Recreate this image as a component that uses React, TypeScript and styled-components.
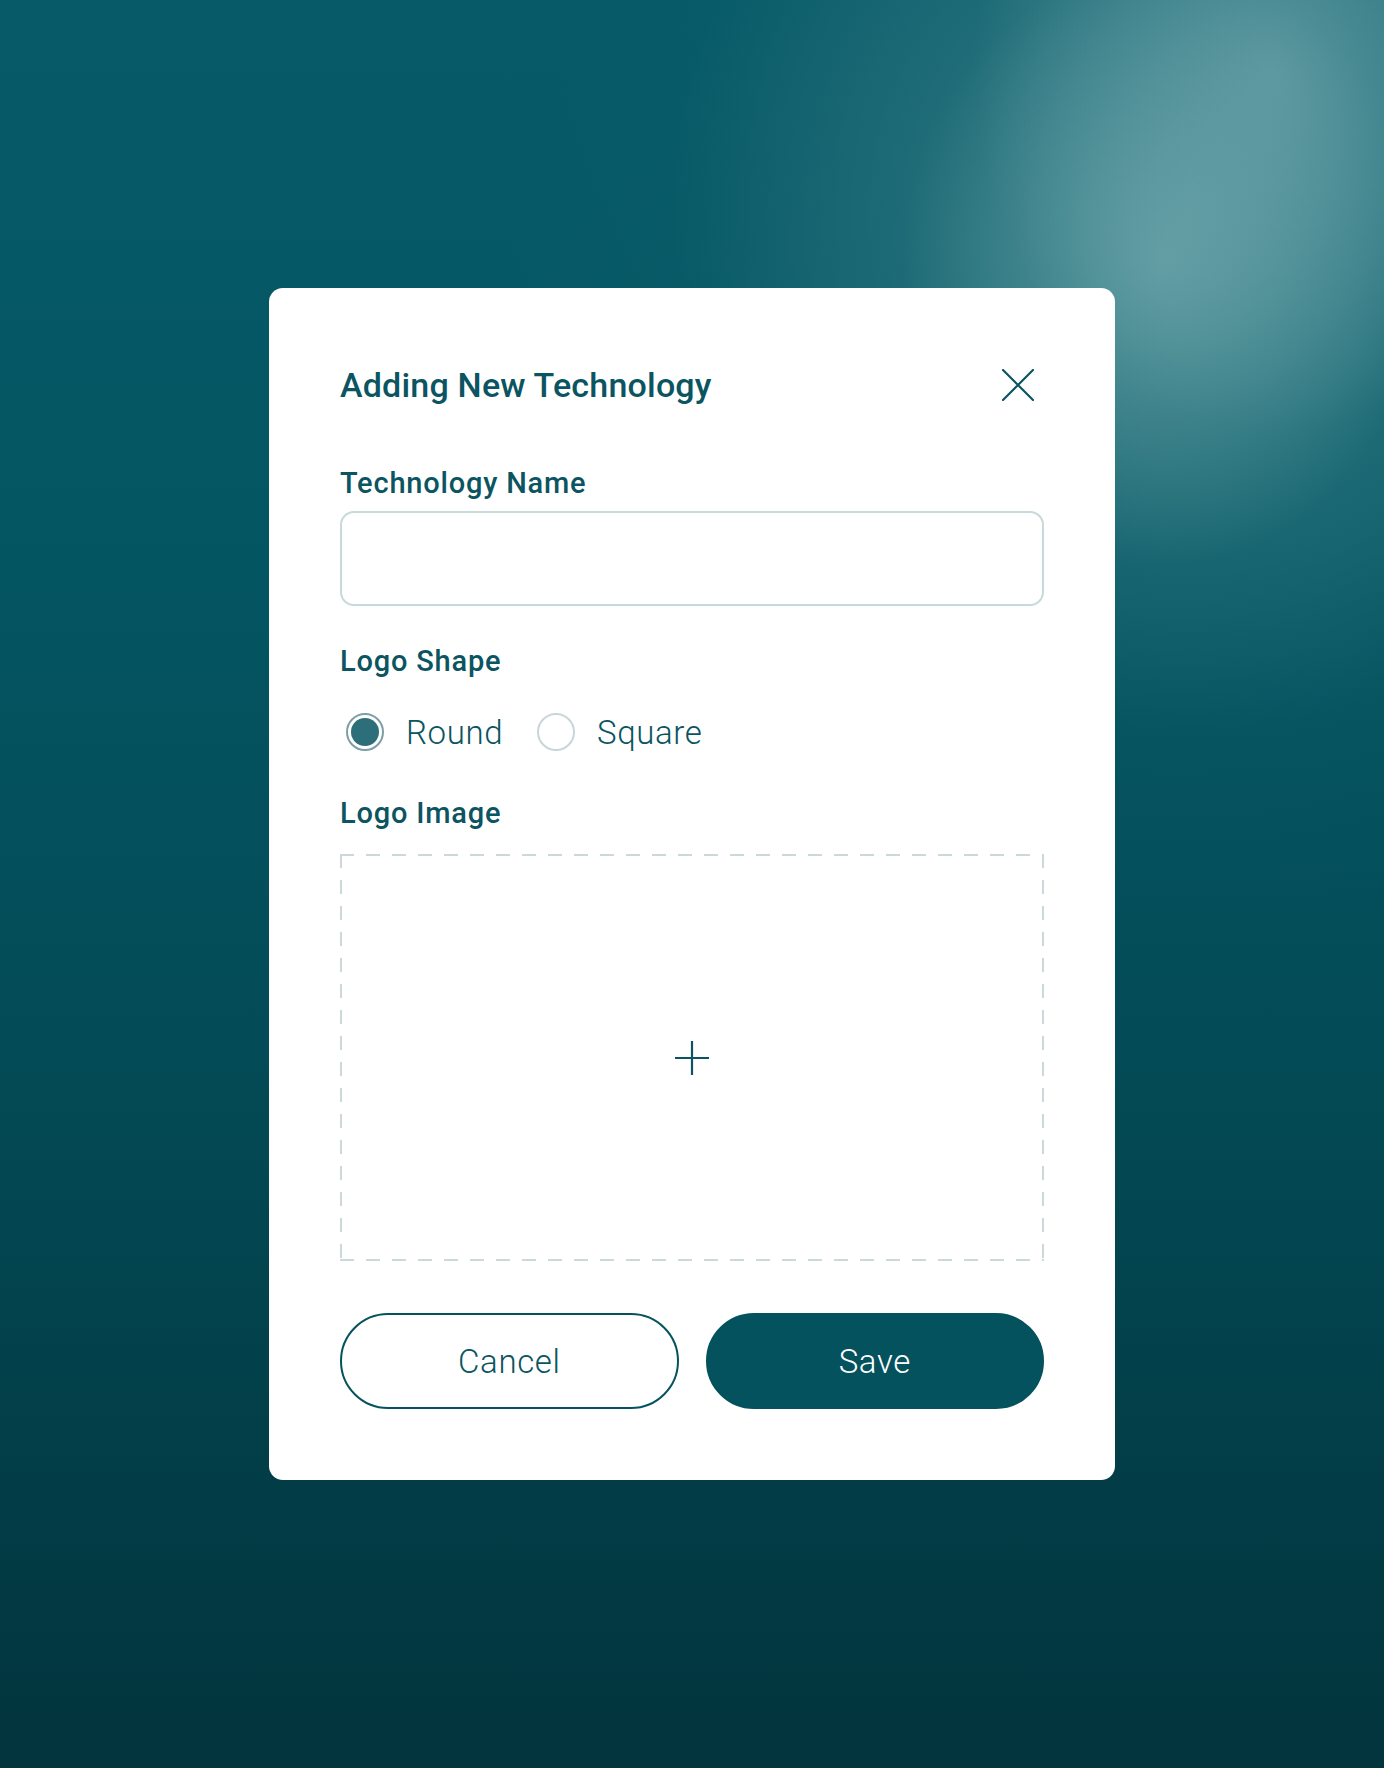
import React, { useState } from "react";
import styled, { createGlobalStyle } from "styled-components";

const ink = "#0b5461";
const deep = "#03525d";

const GlobalStyle = createGlobalStyle`
  html, body {
    margin: 0;
    padding: 0;
  }
  body {
    font-family: Roboto, "Liberation Sans", Arial, sans-serif;
    background: #04444f;
  }
  * {
    box-sizing: border-box;
  }
`;

const Backdrop = styled.div`
  min-height: 100vh;
  display: flex;
  align-items: center;
  justify-content: center;
  background:
    radial-gradient(ellipse 260px 300px at 84% 15%, rgba(125, 178, 182, 0.55), transparent 100%),
    radial-gradient(ellipse 300px 360px at 92% 4%, rgba(120, 172, 178, 0.6), transparent 100%),
    radial-gradient(ellipse 520px 520px at 86% 12%, rgba(90, 152, 158, 0.55), transparent 100%),
    radial-gradient(ellipse 900px 800px at 85% 18%, rgba(30, 110, 120, 0.35), transparent 75%),
    linear-gradient(180deg, #075a68 0%, #045663 30%, #034b56 60%, #02343d 100%);
`;

const Modal = styled.div`
  width: 846px;
  background: #fff;
  border-radius: 14px;
  padding: 65px 71px 71px;
  display: flex;
  flex-direction: column;
`;

const Header = styled.div`
  height: 64px;
  display: flex;
  align-items: center;
  justify-content: space-between;
`;

const Title = styled.h2`
  margin: 0;
  font-size: 34px;
  font-weight: 500;
  color: ${ink};
  letter-spacing: 0.2px;
`;

const CloseButton = styled.button`
  width: 52px;
  height: 52px;
  border: none;
  background: none;
  padding: 0;
  display: flex;
  align-items: center;
  justify-content: center;
  cursor: pointer;
`;

const Label = styled.div<{ $top: number; $bottom: number }>`
  margin-top: ${(p) => p.$top}px;
  margin-bottom: ${(p) => p.$bottom}px;
  height: 36px;
  line-height: 36px;
  font-size: 29px;
  font-weight: 500;
  color: ${ink};
  letter-spacing: 0.8px;
`;

const TextInput = styled.input`
  height: 95px;
  width: 100%;
  border: 2px solid #c8d9d9;
  border-radius: 14px;
  font-size: 30px;
  padding: 0 24px;
  color: ${ink};
  outline: none;
  font-family: inherit;
`;

const RadioGroup = styled.div`
  margin-top: 33px;
  height: 40px;
  display: flex;
  align-items: center;
  gap: 34px;
  padding-left: 6px;
`;

const RadioOption = styled.label`
  display: flex;
  align-items: center;
  gap: 22px;
  cursor: pointer;
  font-size: 33px;
  font-weight: 300;
  letter-spacing: 0.6px;
  color: ${ink};
`;

const RadioCircle = styled.span<{ $checked: boolean }>`
  width: 38px;
  height: 38px;
  border-radius: 50%;
  border: 2px solid ${(p) => (p.$checked ? "#7d9fa5" : "#c7d7d9")};
  display: flex;
  align-items: center;
  justify-content: center;
  &::after {
    content: "";
    width: 28px;
    height: 28px;
    border-radius: 50%;
    background: ${(p) => (p.$checked ? "#2c6f7b" : "transparent")};
  }
`;

const DropZone = styled.div`
  margin-top: 23px;
  height: 407px;
  display: flex;
  align-items: center;
  justify-content: center;
  cursor: pointer;
  background-image:
    repeating-linear-gradient(90deg, #ccd9da 0 14px, transparent 14px 26px),
    repeating-linear-gradient(90deg, #ccd9da 0 14px, transparent 14px 26px),
    repeating-linear-gradient(180deg, #ccd9da 0 14px, transparent 14px 26px),
    repeating-linear-gradient(180deg, #ccd9da 0 14px, transparent 14px 26px);
  background-size: 100% 2px, 100% 2px, 2px 100%, 2px 100%;
  background-position: 0 0, 0 100%, 0 0, 100% 0;
  background-repeat: no-repeat;
`;

const Actions = styled.div`
  margin-top: 52px;
  display: grid;
  grid-template-columns: 1fr 1fr;
  gap: 27px;
`;

const PillButton = styled.button<{ $primary?: boolean }>`
  height: 96px;
  border-radius: 48px;
  border: 2px solid ${deep};
  background: ${(p) => (p.$primary ? deep : "#fff")};
  color: ${(p) => (p.$primary ? "#fff" : ink)};
  font-family: inherit;
  font-size: 33px;
  font-weight: 300;
  letter-spacing: 0.6px;
  cursor: pointer;
`;

export default function App() {
  const [shape, setShape] = useState<"round" | "square">("round");

  return (
    <>
      <GlobalStyle />
      <Backdrop>
        <Modal>
          <Header>
            <Title>Adding New Technology</Title>
            <CloseButton aria-label="Close">
              <svg width="32" height="32" viewBox="0 0 32 32" fill="none">
                <path d="M1 1L31 31M31 1L1 31" stroke={ink} strokeWidth="2.2" strokeLinecap="round" />
              </svg>
            </CloseButton>
          </Header>

          <Label $top={48} $bottom={10}>Technology Name</Label>
          <TextInput type="text" />

          <Label $top={37} $bottom={0}>Logo Shape</Label>
          <RadioGroup>
            <RadioOption onClick={() => setShape("round")}>
              <RadioCircle $checked={shape === "round"} />
              Round
            </RadioOption>
            <RadioOption onClick={() => setShape("square")}>
              <RadioCircle $checked={shape === "square"} />
              Square
            </RadioOption>
          </RadioGroup>

          <Label $top={43} $bottom={0}>Logo Image</Label>
          <DropZone>
            <svg width="36" height="36" viewBox="0 0 36 36" fill="none">
              <path d="M18 1V35M1 18H35" stroke={ink} strokeWidth="2.2" />
            </svg>
          </DropZone>

          <Actions>
            <PillButton>Cancel</PillButton>
            <PillButton $primary>Save</PillButton>
          </Actions>
        </Modal>
      </Backdrop>
    </>
  );
}
